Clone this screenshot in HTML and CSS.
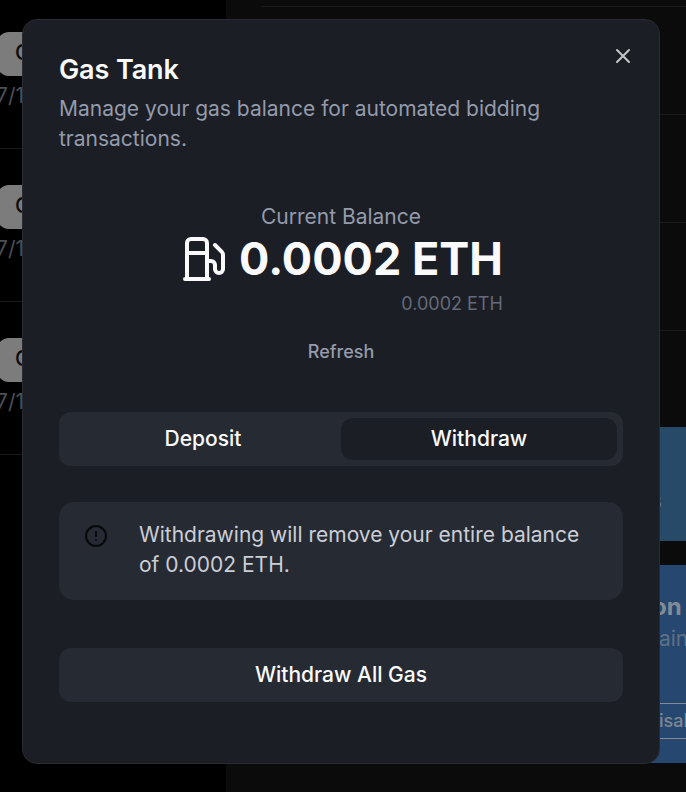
FILE: index.html
```html
<!DOCTYPE html>
<html lang="en">
<head>
<meta charset="utf-8">
<title>Gas Tank</title>
<link rel="stylesheet" href="styles.css">
</head>
<body>
<div class="page">
  <aside class="sidebar">
    <div class="entry"><span class="pill">C</span><span class="date">7/1</span></div>
    <div class="entry"><span class="pill">C</span><span class="date">7/1</span></div>
    <div class="entry"><span class="pill">C</span><span class="date">7/1</span></div>
  </aside>
  <main class="main">
    <div class="rows"><div class="row"></div><div class="row"></div><div class="row"></div></div>
    <section class="card card-a"><span class="card-note">s</span></section>
    <section class="card card-b">
      <strong class="card-title">on</strong>
      <span class="card-text">tain</span>
      <span class="card-button">Disable</span>
    </section>
  </main>
</div>

<div class="dialog" role="dialog" aria-labelledby="title">
  <button class="close" aria-label="Close">
    <svg viewBox="0 0 24 24"><path d="M18 6 6 18M6 6l12 12"/></svg>
  </button>
  <header class="header">
    <h2 class="title" id="title">Gas Tank</h2>
    <p class="description">Manage your gas balance for automated bidding transactions.</p>
  </header>
  <div class="balance">
    <span class="label">Current Balance</span>
    <div class="amount-group">
      <div class="amount">
        <svg class="fuel" viewBox="0 0 24 24"><path d="M3 22h12M4 9h10M14 22V4a2 2 0 0 0-2-2H6a2 2 0 0 0-2 2v18M14 13h2a2 2 0 0 1 2 2v2a2 2 0 0 0 4 0V9.83a2 2 0 0 0-.59-1.42L18 5"/></svg>
        <span>0.0002 ETH</span>
      </div>
      <span class="sub-amount">0.0002 ETH</span>
    </div>
    <button class="refresh">Refresh</button>
  </div>
  <div class="tabs">
    <button class="tab">Deposit</button>
    <button class="tab active">Withdraw</button>
  </div>
  <div class="alert">
    <svg class="alert-icon" viewBox="0 0 24 24"><circle cx="12" cy="12" r="10"/><path d="M12 8v4M12 16h.01"/></svg>
    <p class="alert-text">Withdrawing will remove your entire balance of 0.0002 ETH.</p>
  </div>
  <button class="submit">Withdraw All Gas</button>
</div>
</body>
</html>
```
FILE: styles.css
```css
* { box-sizing: border-box; margin: 0; padding: 0; }
body {
  width: 686px; height: 792px; overflow: hidden; position: relative;
  background: #000; color: #fafafa;
  font: 400 21px/30px Inter, sans-serif;
}
button { font: inherit; color: inherit; border: 0; background: none; }
svg { fill: none; stroke: currentColor; stroke-width: 2; stroke-linecap: round; stroke-linejoin: round; }

.page { display: flex; height: 792px; }
.sidebar { width: 226px; flex: none; background: #000; }
.entry { height: 153px; padding-top: 36px; border-bottom: 1px solid #1a1a1a; }
.entry:first-child { height: 149px; padding-top: 32px; }
.pill {
  display: block; width: 100px; height: 44px; margin-left: -3px; padding-left: 18px;
  border-radius: 12px; background: #7c7c7c; color: #0c0c0c;
  font-weight: 500; line-height: 42px;
}
.date { display: block; margin: 5px 0 0 -4px; color: #4c4f56; }
.main { flex: 1; background: #0b0b0b; overflow: hidden; }
.rows { height: 427px; padding-left: 36px; }
.row { height: 108px; border-bottom: 1px solid #1a1a1a; }
.row:first-child { height: 115px; border-top: 0; background: linear-gradient(#1a1a1a, #1a1a1a) 0 6px / 100% 1px no-repeat; }
.row:last-child { height: 108px; }
.card { margin-left: 36px; }
.card-a { height: 114px; margin-bottom: 24px; padding: 59px 0 0 389px; background: #274a69; color: #5b6e80; }
.card-b {
  display: flex; flex-direction: column; align-items: flex-start;
  height: 198px; padding: 26px 0 0 388px; background: #26476f;
}
.card-title { color: #838b94; font-size: 24px; line-height: 32px; }
.card-title { margin-left: 2px; }
.card-text { margin: 1px 0 0 2px; color: #5f7185; }
.card-button {
  width: 90px; height: 36px; margin-top: 49px; margin-left: -5px; 
  border: 1px solid #858b93; color: #7f8791;
  font-size: 18px; font-weight: 500; line-height: 33px;
}

.dialog {
  position: absolute; left: 22px; top: 18.5px; width: 638px; height: 745px;
  padding: 36.5px 36px 0;
  border: 1px solid #292b31; border-radius: 15px; background: #1b1e25;
}
.close { position: absolute; right: 24px; top: 24px; width: 24px; height: 24px; color: #c5c6c8; }
.close svg { display: block; width: 24px; height: 24px; }
.title { font-size: 27px; font-weight: 600; line-height: 27px; letter-spacing: -0.1px; }
.description { margin-top: 10.5px; color: #949bab; }
.balance { display: flex; flex-direction: column; align-items: center; margin-top: 48px; }
.label { color: #949bab; }
.amount-group { display: flex; flex-direction: column; align-items: flex-end; }
.amount { display: flex; align-items: center; gap: 12px; height: 54px; font-size: 45px; font-weight: 700; line-height: 54px; white-space: nowrap; }
.fuel { width: 48px; height: 48px; flex: none; }
.sub-amount { margin-top: 6px; color: #646a79; font-size: 18px; line-height: 24px; }
.refresh { margin-top: 24px; color: #949bab; font-size: 18px; font-weight: 500; line-height: 24px; }
.tabs { display: flex; height: 54px; margin-top: 48px; padding: 6px; border-radius: 12px; background: #262a32; }
.tab { flex: 1; height: 42px; border-radius: 12px; font-weight: 500; }
.active { background: #1b1e25; }
.alert { display: flex; height: 98px; margin-top: 36px; padding: 18px 24px; gap: 30px; border-radius: 15px; background: #262a32; }
.alert-icon { width: 24px; height: 24px; margin: 4px 1px 0; flex: none; color: #08090b; }
.alert-text { color: #cbced7; }
.submit { display: block; width: 100%; height: 54px; margin-top: 48px; border-radius: 12px; background: #262a32; font-weight: 500; }
```
